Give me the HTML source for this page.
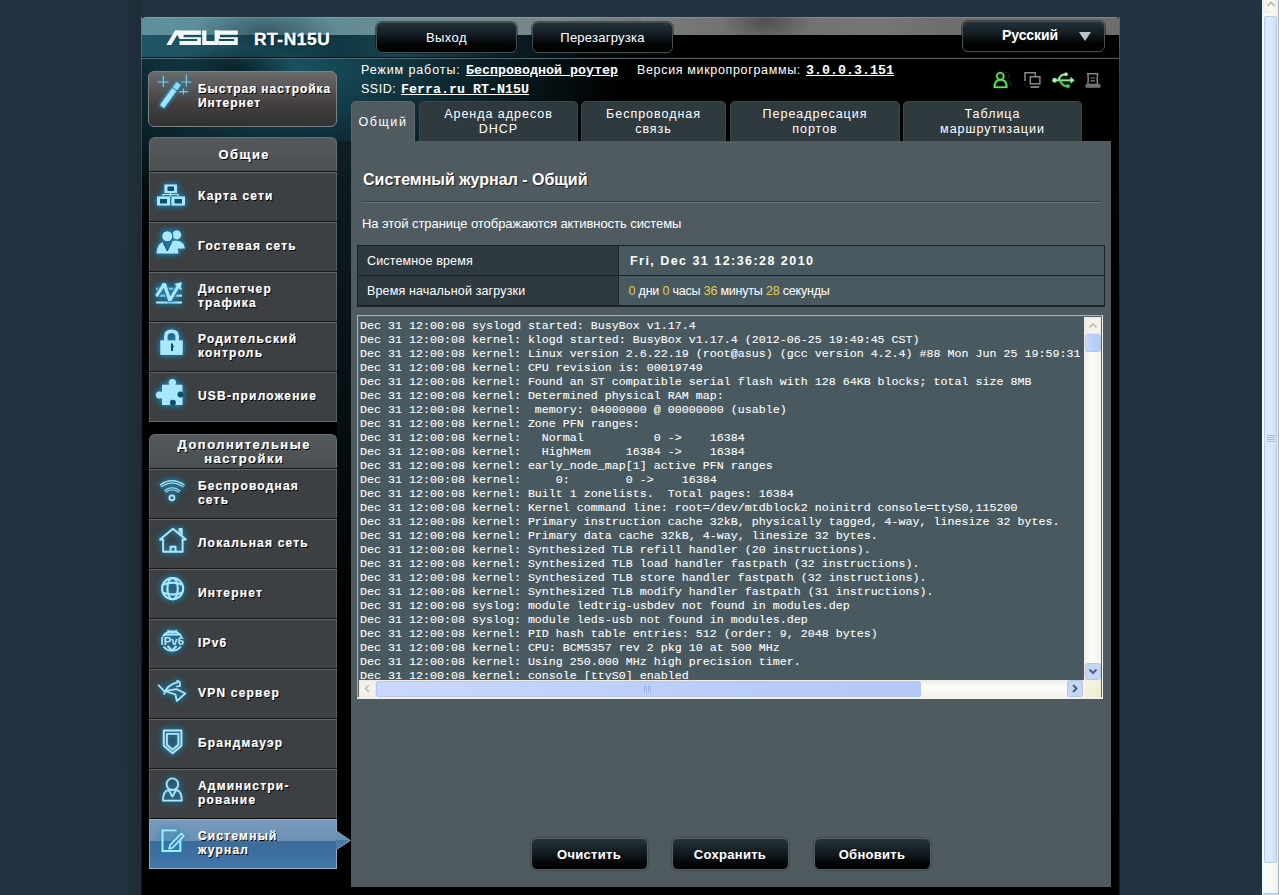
<!DOCTYPE html>
<html><head><meta charset="utf-8"><title>ASUS RT-N15U</title>
<style>
*{margin:0;padding:0;box-sizing:border-box}
html,body{width:1279px;height:895px;overflow:hidden}
body{position:relative;background:#22333f;font-family:"Liberation Sans",sans-serif;color:#fff}
.a{position:absolute}
#pgshade{left:120px;top:0;width:21px;height:895px;background:linear-gradient(90deg,#22333f,#1d2c36)}
#wrap{left:141px;top:17px;width:979px;height:878px;background:#000;border-radius:5px 5px 0 0;overflow:hidden}
#hdr{left:141px;top:17px;width:979px;height:40px;border-radius:5px 5px 0 0;overflow:hidden;box-shadow:inset 0 1px 0 rgba(255,255,255,.18);
 background:linear-gradient(180deg,rgba(255,255,255,0) 0,rgba(255,255,255,0) 18px,rgba(0,0,0,.0) 18px),
 linear-gradient(90deg,#5f919d 0,#5a8b97 120px,#6a8c93 260px,#788585 420px,#707070 560px,#6d6d6d 979px)}
#hdrlow{left:141px;top:35px;width:979px;height:22px;
 background:linear-gradient(90deg,#1f5564 0,#1d5260 90px,#0f3845 200px,#1a4450 260px,#0c2026 360px,#030607 460px,#000 560px,#000 979px)}
#sepd{left:141px;top:57px;width:979px;height:1px;background:#071015}
#sepl{left:141px;top:58px;width:979px;height:1px;background:linear-gradient(90deg,#4f6f79,#55656a 400px,#505556 979px)}
#glow{left:141px;top:59px;width:979px;height:300px;
 background:radial-gradient(ellipse 330px 170px at 150px 10px,rgba(27,88,105,.95),rgba(20,64,78,.6) 50%,rgba(0,0,0,0) 100%)}
#lborder{left:141px;top:17px;width:1px;height:878px;background:linear-gradient(#5d8d99,#35525a 60px,#1b2a30 300px,#0e1418)}
#rborder{left:1119px;top:17px;width:1px;height:878px;background:linear-gradient(#6d6d6d,#3a3a3a 60px,#222 300px,#1a1a1a)}

/* logo */
#logo{left:160px;top:28px;width:80px;height:20px}
#model{left:254px;top:28.7px;letter-spacing:.55px;font:bold 17.4px/20px "Liberation Sans",sans-serif;color:#fff;-webkit-text-stroke:.35px #fff;text-shadow:1px 1px 1px rgba(0,0,0,.5)}

/* top buttons */
.tb{height:31px;border-radius:6px;border:1px solid #465053;
 background:linear-gradient(#23323a 0,#141d22 40%,#020303 75%,#000 100%);
 box-shadow:0 0 0 1px rgba(0,0,0,.4), 0 1px 1px rgba(255,255,255,.08)}
.tbt{width:100%;text-align:center;top:7px;font:13px/16px "Liberation Sans",sans-serif;color:#fff;letter-spacing:.4px}
#b1{left:376px;top:22px;width:141px}
#b2{left:532px;top:22px;width:141px}
#b3{left:962px;top:21px;width:143px}
#b3 .tbt{font-weight:bold;font-size:14px;left:7px;width:120px;top:5px;letter-spacing:-.1px}
#tri{left:1079px;top:32px;width:0;height:0;border-left:6px solid transparent;border-right:6px solid transparent;border-top:9px solid #b9c3c9}

/* info */
.inf{font:12.5px/16px "Liberation Sans",sans-serif;color:#fff;white-space:nowrap}
.mono{font:bold 13.333px/16px "Liberation Mono",monospace;text-decoration:underline;color:#fff}
#inf1{left:361px;top:62px}
#inf2{left:637px;top:62px}
#inf3{left:361px;top:81px}

/* status icons */
.si{top:71px;width:20px;height:18px}

/* tabs */
.tab{top:101px;height:40px;border-radius:5px 5px 0 0;background:#2f3a3f;font:12.5px/15px "Liberation Sans",sans-serif;letter-spacing:.98px;color:#fff;text-align:center;border:1px solid #3b474c;border-bottom:none}
.tab.one{padding-top:13px}
.tab.two{padding-top:5px}
.tab.act{background:#505b60;border-color:#5d686c;letter-spacing:1.55px}

/* sidebar */
#qs{left:148px;top:71px;width:189px;height:56px;border-radius:6px;border:1px solid #7d8184;
 background:linear-gradient(#6b6a6a 0,#595654 30%,#443f3e 60%,#2f3233 100%)}
#qsic{left:150px;top:72px;width:45px;height:50px}
#qst{left:198px;top:82px;font:bold 12px/14px "Liberation Sans",sans-serif;letter-spacing:.95px;text-shadow:1px 1px 0 #000;-webkit-text-stroke:.2px #fff}
.mh{left:149px;width:188px;height:34px;border-radius:6px 6px 0 0;border:1px solid #686d70;border-bottom:none;
 background:linear-gradient(#54595c,#4a4f52)}
.mht{width:100%;text-align:center;padding-left:2.5px;font:bold 13px/14px "Liberation Sans",sans-serif;letter-spacing:1.45px;text-shadow:1px 1px 0 #000;-webkit-text-stroke:.2px #fff}
.mi{left:149px;width:188px;height:50px;background:#3c4043;border-left:1px solid #5a5e60;border-right:1px solid #5a5e60}
.mi::after{content:"";position:absolute;left:-1px;right:-1px;top:0;height:2px;background:linear-gradient(#141617 0,#141617 1px,#62676a 1px)}
.mi.sel{background:linear-gradient(#7a9cbc 0,#6c91b4 46%,#3d6c9b 46%,#3d6e9f 70%,#4479ad 100%);border-color:#8aa8c2;box-shadow:inset 0 1px 0 #93b0c8}
.mi.sel::after{background:linear-gradient(#111 0,#111 1px,#93b0c8 1px)}
.mt{left:48px;top:18px;font:bold 12px/14px "Liberation Sans",sans-serif;letter-spacing:1.2px;white-space:nowrap;text-shadow:1px 1px 0 #000;-webkit-text-stroke:.2px #fff}
.mt.two{top:11px}
.ic{left:0;top:0;width:45px;height:50px}
#arrow{left:337px;top:825px;width:0;height:0;border-top:16px solid transparent;border-bottom:16px solid transparent;border-left:13px solid #5a86ad}
#colgap{left:337px;top:141px;width:14px;height:754px;background:linear-gradient(#0d1e25,#060d10 300px,#000 500px)}

/* content */
#content{left:351px;top:141px;width:760px;height:746px;background:#505b60}
#title{left:363px;top:170px;font:bold 16px/20px "Liberation Sans",sans-serif;color:#fff;text-shadow:1px 1px 1px #1f2628}
#hr{left:362px;top:201px;width:738px;height:2px;background:linear-gradient(#353d41 0,#353d41 1px,#6a7478 1px)}
#desc{left:362px;top:216px;font:13px/16px "Liberation Sans",sans-serif;color:#fff;letter-spacing:-.06px}
#tbl{left:357px;top:245px;width:748px;height:62px;background:#1d2426}
.c1{left:1px;width:260px;height:29px;background:#2f3a40;font:12.5px/16px "Liberation Sans",sans-serif;letter-spacing:.15px;padding:7px 0 0 9px}
.c2{left:262px;width:485px;height:29px;background:#485a60;font:12.5px/16px "Liberation Sans",sans-serif;letter-spacing:-.2px;padding:7px 0 0 9.5px}
.y{color:#e3cf55}
#fri{font-weight:bold;font-size:12.5px;letter-spacing:1.46px;margin-left:1.5px}

#logbox{left:357px;top:315px;width:746px;height:384px;background:#56646a;border-top:1px solid #a9b3b4;border-left:1px solid #a9b3b4;border-right:1px solid #f5f5f5;border-bottom:2px solid #f2f2f2}
#logview{left:359px;top:317px;width:725px;height:363px;background:#485a60;overflow:hidden}
#logtxt{left:359px;top:317px;width:725px;height:363px;overflow:hidden;white-space:pre;font:11.667px/14px "Liberation Mono",monospace;color:#fff;padding:2px 0 0 1px;-webkit-text-stroke:.08px #fff}

/* scrollbars */
#vsb{left:1084px;top:317px;width:17px;height:363px;background:linear-gradient(90deg,#eeede5,#fdfdf8 40%,#f3f1ea)}
#hsb{left:359px;top:680px;width:725px;height:17px;background:linear-gradient(#eeede5,#fdfdf8 40%,#f3f1ea)}
#corner{left:1084px;top:680px;width:17px;height:17px;background:linear-gradient(135deg,#f6f3e4,#efeccf)}
.sbtn{width:17px;height:17px;border-radius:2px}
.thumb{border-radius:2px;border:1px solid #b6c8f6;background:linear-gradient(90deg,#c9d8fc,#bccff9 50%,#b3c8f7)}

/* bottom buttons */
.bb{top:838px;width:117px;height:32px;border-radius:6px;border:1px solid #566064;
 background:linear-gradient(#253439 0,#131c20 45%,#050708 80%,#000 100%);box-shadow:0 0 2px rgba(0,0,0,.6)}
.bbt{width:100%;text-align:center;top:8px;font:bold 13px/16px "Liberation Sans",sans-serif;color:#fff;letter-spacing:.3px}

/* page scrollbar */
#psb{left:1262px;top:0;width:17px;height:895px;background:linear-gradient(90deg,#e9f8fb 0,#f2fdfd 2px,#f8f8f2 60%,#f1f0e8 100%)}

.mi.last{height:51px;border-bottom:1px solid #62676a}
.mi.sel.last{border-bottom-color:#8fb0cc}
#blob{left:141px;top:17px;width:500px;height:124px;background:radial-gradient(ellipse 75px 26px at 125px 16px,rgba(5,25,32,.42),rgba(5,25,32,0)),radial-gradient(ellipse 60px 22px at 95px 52px,rgba(0,0,0,.5),rgba(0,0,0,0))}
#blob2{left:641px;top:17px;width:300px;height:18px;background:radial-gradient(ellipse 45px 22px at 125px 4px,rgba(20,20,20,.35),rgba(20,20,20,0)),linear-gradient(90deg,rgba(255,255,255,.06),rgba(255,255,255,0) 40%,rgba(255,255,255,.05) 80%,rgba(255,255,255,0))}

</style></head><body>
<svg width="0" height="0" style="position:absolute"><defs><filter id="glw" x="-50%" y="-50%" width="200%" height="200%"><feGaussianBlur in="SourceAlpha" stdDeviation="3.2" result="b"/><feFlood flood-color="#1a8cc4" flood-opacity=".8"/><feComposite in2="b" operator="in" result="g"/><feMerge><feMergeNode in="g"/><feMergeNode in="g"/><feMergeNode in="SourceGraphic"/></feMerge></filter></defs></svg>
<div id="pgshade" class="a"></div>
<div id="wrap" class="a"></div>
<div id="hdr" class="a"></div>
<div id="hdrlow" class="a"></div>
<div id="sepd" class="a"></div>
<div id="sepl" class="a"></div>
<div id="glow" class="a"></div>
<div id="blob" class="a"></div>
<div id="blob2" class="a"></div>
<div id="lborder" class="a"></div>
<div id="rborder" class="a"></div>
<svg id="logo" class="a" viewBox="160 28 80 20"><g fill="#f2f9f9">
<polygon points="166.3,45 175,30.6 179.8,30.6 171.2,45"/>
<path d="M175 30.6 H200.9 V34.7 H183.6 V37.3 H200.9 V45 H179.5 V41 H197.2 V38.9 H179.5 Z"/>
<path d="M202.2 30.6 H206.4 V41 H214.6 V30.6 H218.8 V45 H202.2 Z"/>
<path d="M214.6 30.6 H237.8 V34.7 H220 V37.3 H237.8 V45 H218.8 V41 H234.2 V38.9 H218.8 Z"/>
</g></svg>
<div id="model" class="a">RT-N15U</div>

<div id="b1" class="tb a"><div class="tbt a">Выход</div></div>
<div id="b2" class="tb a"><div class="tbt a" style="letter-spacing:.25px">Перезагрузка</div></div>
<div id="b3" class="tb a"><div class="tbt a">Русский</div></div>
<div id="tri" class="a"></div>

<div id="inf1" class="inf a" style="letter-spacing:.9px">Режим работы: </div><div class="inf mono a" style="left:466px;top:63px">Беспроводной роутер</div>
<div id="inf2" class="inf a" style="letter-spacing:.66px">Версия микропрограммы: </div><div class="inf mono a" style="left:806px;top:63px">3.0.0.3.151</div>
<div id="inf3" class="inf a" style="letter-spacing:.53px">SSID: </div><div class="inf mono a" style="left:401px;top:82px">Ferra.ru RT-N15U</div>

<svg class="a" style="left:985px;top:66px;overflow:visible" width="125" height="28" viewBox="985 66 125 28">
<defs><filter id="gg" x="-50%" y="-50%" width="200%" height="200%"><feGaussianBlur in="SourceAlpha" stdDeviation="1.3" result="b"/><feFlood flood-color="#1fa31f" flood-opacity=".8"/><feComposite in2="b" operator="in" result="g"/><feMerge><feMergeNode in="g"/><feMergeNode in="SourceGraphic"/></feMerge></filter></defs>
<g fill="none" stroke="#1c211c" stroke-width="1.3"><path d="M1004.5 72.5 A3 3 0 1 1 1007 78.5"/><path d="M1008.5 80 Q1011.5 82 1011.5 86.5"/></g>
<g filter="url(#gg)" fill="none" stroke="#6fdc6f" stroke-width="1.6"><circle cx="1000.3" cy="76.2" r="3.4"/><path d="M994.5 87.3 Q994.5 79.8 1000.6 79.8 Q1006.7 79.8 1006.7 87.3 Z"/></g>
<g fill="none" stroke="#8a8a8a" stroke-width="1.5"><path d="M1025 81 V72.8 H1035.3 V76"/><rect x="1030.3" y="76.8" width="9.6" height="7"/><path d="M1030.4 87 H1039.2" stroke-width="1.8"/><path d="M1025 84 V84.5 M1026.5 86.5 H1027" stroke-width="1"/></g>
<g filter="url(#gg)"><path d="M1055 80.3 H1071.5" stroke="#8fe08f" stroke-width="1.7"/><path d="M1070.5 77 L1074.5 80.3 L1070.5 83.5 Z" fill="#a8e8a8"/><circle cx="1054.6" cy="80.3" r="2.2" fill="#b8ecb8"/><path d="M1058.5 80 Q1060 74.5 1065 74.3" stroke="#a8e8a8" stroke-width="1.7" fill="none"/><circle cx="1066" cy="74.3" r="1.7" fill="#b8ecb8"/><path d="M1060 80.5 Q1062 86.2 1067 86.2" stroke="#5bd45b" stroke-width="1.7" fill="none"/><rect x="1066.5" y="84.6" width="3" height="3" fill="#5bd45b"/></g>
<g fill="none" stroke="#858585" stroke-width="1.5"><path d="M1087.8 73.8 H1097.6 Q1096.6 79 1097.6 84.5 H1087.8 Q1088.8 79 1087.8 73.8 Z"/><path d="M1090.5 78 H1095 M1090.5 80.8 H1095" stroke-width="1.2"/></g><rect x="1085.5" y="84.2" width="15" height="3.6" fill="#707070"/>
</svg>

<div class="tab act one a" style="left:351px;width:64px">Общий</div>
<div class="tab two a" style="left:419px;width:159px">Аренда адресов<br>DHCP</div>
<div class="tab two a" style="left:581px;width:145px">Беспроводная<br>связь</div>
<div class="tab two a" style="left:730px;width:170px">Переадресация<br>портов</div>
<div class="tab two a" style="left:903px;width:179px">Таблица<br>маршрутизации</div>

<div id="colgap" class="a"></div>
<div id="qs" class="a"></div>
<svg id="qsic" class="a" viewBox="150 72 45 50" style="overflow:visible"><g stroke="#86dff5" stroke-width="1.1" opacity=".85" filter="url(#glw)"><path d="M163.4 75.5 V87 M157.8 82 H168.6"/><path d="M186.3 74.5 V86.5 M181.3 82 H191.4"/><path d="M183.5 88.5 V94.5 M179 91.6 H188"/></g>
<g filter="url(#glw)" transform="rotate(36 170 95)"><rect x="167.7" y="80.5" width="5.2" height="6.6" fill="#86e4fb"/><rect x="167.7" y="88.2" width="5.2" height="21" fill="#9aeaff"/></g></svg>
<div id="qst" class="a">Быстрая настройка<br>Интернет</div>

<div class="mh a" style="top:137px"><div class="mht a" style="top:10px">Общие</div></div>
<div class="mh a" style="top:434px"><div class="mht a" style="top:3px">Дополнительные<br>настройки</div></div>
<div class="mi a" style="top:171px"><div class="ic a"><svg width="45" height="50" viewBox="0 0 45 50" style="display:block;overflow:visible"><g filter="url(#glw)"><rect x="14.5" y="13.5" width="12.5" height="8.5" fill="#a8e8fa"/><rect x="7" y="25.5" width="13" height="9" fill="#a8e8fa"/><rect x="21.5" y="25.5" width="13.5" height="9" fill="#a8e8fa"/><path d="M20.5 22 V25.5 M13 25 V23.5 H28 V25" stroke="#a8e8fa" stroke-width="1.2" fill="none"/></g><rect x="17.5" y="15.5" width="6.5" height="4.5" fill="#0e4f6e"/><rect x="10" y="28" width="7" height="4.5" fill="#0e4f6e"/><rect x="24.5" y="28" width="7.5" height="4.5" fill="#0e4f6e"/></svg></div><div class="mt a">Карта сети</div></div>
<div class="mi a" style="top:221px"><div class="ic a"><svg width="45" height="50" viewBox="0 0 45 50" style="display:block;overflow:visible"><g filter="url(#glw)"><circle cx="26.8" cy="13.9" r="4.3" fill="#a8e8fa"/><path d="M22 20 Q30 18.5 33.5 23 L35 27.5 H27 Z" fill="#a8e8fa"/><circle cx="17.3" cy="15.3" r="5.6" fill="#a8e8fa" stroke="#0e4f6e" stroke-width="1"/><path d="M6.5 32.5 Q7.5 22 13 21.3 L17.3 30 L21.6 21.3 Q27.5 22 28.5 32.5 Z" fill="#a8e8fa"/></g><path d="M13.2 21.5 L17.3 30 L21.4 21.5" stroke="#0e4f6e" stroke-width="1" fill="none"/></svg></div><div class="mt a">Гостевая сеть</div></div>
<div class="mi a" style="top:271px"><div class="ic a"><svg width="45" height="50" viewBox="0 0 45 50" style="display:block;overflow:visible"><g filter="url(#glw)"><path d="M6 17.8 H32 M6 24.6 H32 M6 31.5 H32" stroke="#a8e8fa" stroke-width="2.2" fill="none"/></g><path d="M6.5 25 L14.3 12.8 L19.8 29.5 L28.5 14.5" stroke="#2a5a70" stroke-width="5.5" fill="none" stroke-linejoin="bevel"/><g filter="url(#glw)"><path d="M6.5 25 L14.3 12.8 L19.8 29.5 L28.5 14.5" stroke="#a8e8fa" stroke-width="3.2" fill="none" stroke-linejoin="bevel"/><path d="M32 11 L24.5 13 L30.2 18.5 Z" fill="#a8e8fa"/></g></svg></div><div class="mt a two">Диспетчер<br>трафика</div></div>
<div class="mi a" style="top:321px"><div class="ic a"><svg width="45" height="50" viewBox="0 0 45 50" style="display:block;overflow:visible"><g filter="url(#glw)"><path d="M14 20 V15.5 Q14 8.5 21.5 8.5 Q29 8.5 29 15.5 V20 H25.5 V16 Q25.5 12 21.5 12 Q17.5 12 17.5 16 V20 Z" fill="#a8e8fa"/><rect x="10.3" y="19.4" width="22.4" height="14.5" fill="#a8e8fa"/></g><path d="M21 22.5 H23 V24.5 L24.5 25.5 L23 26.5 V30 H21 Z" fill="#0e4f6e"/></svg></div><div class="mt a two">Родительский<br>контроль</div></div>
<div class="mi a last" style="top:371px"><div class="ic a"><svg width="45" height="50" viewBox="0 0 45 50" style="display:block;overflow:visible"><g filter="url(#glw)"><rect x="12" y="13.8" width="20.4" height="20.2" fill="#a8e8fa"/><circle cx="22.4" cy="11.6" r="3.6" fill="#a8e8fa"/><circle cx="9.5" cy="24" r="3.6" fill="#a8e8fa"/></g><circle cx="30.5" cy="23.6" r="3" fill="#0e4f6e"/><circle cx="22.9" cy="31.8" r="3" fill="#0e4f6e"/></svg></div><div class="mt a">USB-приложение</div></div>
<div class="mi a" style="top:468px"><div class="ic a"><svg width="45" height="50" viewBox="0 0 45 50" style="display:block;overflow:visible"><g filter="url(#glw)" fill="none" stroke="#a8e8fa"><path d="M10.5 18 Q22 9.5 34 18" stroke-width="3.2"/><path d="M15 23.5 Q22 18 29.5 23.5" stroke-width="3"/><circle cx="21.9" cy="29.8" r="2.5" stroke-width="1.8"/></g><g fill="none" stroke="#0e4f6e" stroke-width=".9"><path d="M10.5 18 Q22 9.5 34 18"/><path d="M15 23.5 Q22 18 29.5 23.5"/></g></svg></div><div class="mt a two">Беспроводная<br>сеть</div></div>
<div class="mi a" style="top:518px"><div class="ic a"><svg width="45" height="50" viewBox="0 0 45 50" style="display:block;overflow:visible"><g filter="url(#glw)" fill="none" stroke="#a8e8fa" stroke-width="1.9" stroke-linejoin="round"><path d="M10 21.5 L22.9 10.8 L35.8 21.5 H32.6 V33.8 H13.1 V21.5 Z"/><path d="M20.6 33.8 V28.8 H25.5 V33.8"/><path d="M29.5 16 V11 H31.7 V18"/></g></svg></div><div class="mt a">Локальная сеть</div></div>
<div class="mi a" style="top:568px"><div class="ic a"><svg width="45" height="50" viewBox="0 0 45 50" style="display:block;overflow:visible"><g filter="url(#glw)" fill="none" stroke="#a8e8fa" stroke-width="2"><circle cx="22.6" cy="20.6" r="10.6"/><ellipse cx="22.6" cy="20.6" rx="5.2" ry="10.6"/><path d="M12.8 16.5 Q22.6 13 32.4 16.5 M12.8 24.7 Q22.6 28.2 32.4 24.7"/></g></svg></div><div class="mt a">Интернет</div></div>
<div class="mi a" style="top:618px"><div class="ic a"><svg width="45" height="50" viewBox="0 0 45 50" style="display:block;overflow:visible"><g filter="url(#glw)"><g fill="none" stroke="#a8e8fa" stroke-width="1.8"><path d="M12.8 18.5 A11 11 0 0 1 31.5 18.5"/><path d="M13.5 28.5 A11 11 0 0 0 30.8 28.5"/><path d="M14.5 16.5 H29.5 M17.5 12.5 Q22 16 27 12.5 M17.5 28 L22 32.5 L26.5 28"/></g><text x="10.5" y="27" font-family="Liberation Sans" font-weight="bold" font-size="10.5" fill="#a8e8fa" textLength="23.5" lengthAdjust="spacingAndGlyphs">IPv6</text></g></svg></div><div class="mt a">IPv6</div></div>
<div class="mi a" style="top:668px"><div class="ic a"><svg width="45" height="50" viewBox="0 0 45 50" style="display:block;overflow:visible"><g filter="url(#glw)" fill="none" stroke="#a8e8fa" stroke-width="1.7" stroke-linejoin="round"><path d="M8.2 16.8 L14.5 23.5"/><path d="M13.8 26.5 Q17 16.5 28.2 14.2"/><path d="M26.5 12.6 L29.6 13.8 L30.2 18 L26.2 18.5"/><path d="M14.8 23 L26.8 21.2 L35.4 25.4 L26.8 33 L25.5 26.5 Z"/></g></svg></div><div class="mt a">VPN сервер</div></div>
<div class="mi a" style="top:718px"><div class="ic a"><svg width="45" height="50" viewBox="0 0 45 50" style="display:block;overflow:visible"><g filter="url(#glw)" fill="none" stroke="#a8e8fa" stroke-width="1.9" stroke-linejoin="round"><path d="M13.8 12.5 H31.4 V27.8 L22.6 35.2 L13.8 27.8 Z"/><path d="M16.9 15.9 H28.4 V26.8 L22.6 31.8 L16.9 26.8 Z"/></g></svg></div><div class="mt a">Брандмауэр</div></div>
<div class="mi a" style="top:768px"><div class="ic a"><svg width="45" height="50" viewBox="0 0 45 50" style="display:block;overflow:visible"><g filter="url(#glw)" fill="none" stroke="#a8e8fa" stroke-width="1.8" stroke-linejoin="round"><circle cx="22.4" cy="16.2" r="5.8"/><path d="M13 32.6 Q13 23 18.6 21.8 L22.4 28.6 L26.2 21.8 Q31.8 23 31.8 32.6 Z"/></g></svg></div><div class="mt a two">Администри-<br>рование</div></div>
<div class="mi a sel last" style="top:818px"><div class="ic a"><svg width="45" height="50" viewBox="0 0 45 50" style="display:block;overflow:visible"><g filter="url(#glw)" fill="none" stroke="#a8e8fa"><path d="M30.3 22.5 V33 H12.5 V12.4 H26.5" stroke-width="1.9"/><path d="M19.3 30.8 L20 27.2 L31.3 15.5 L33.8 18 L22.5 29.8 Z" stroke-width="1.7" stroke-linejoin="round"/></g></svg></div><div class="mt a two">Системный<br>журнал</div></div>
<svg class="a" style="left:336px;top:829px" width="16" height="23" viewBox="336 829 16 23"><defs><linearGradient id="arg" x1="0" y1="0" x2="0" y2="1"><stop offset="0" stop-color="#7398ba"/><stop offset=".5" stop-color="#6a90b3"/><stop offset=".5" stop-color="#4a7aa8"/><stop offset="1" stop-color="#4a7cab"/></linearGradient></defs><polygon points="336,831 350.3,840.5 336,849.5" fill="url(#arg)"/><path d="M336.5 831 L350.3 840.5 L336.5 849.5" fill="none" stroke="#9cb6cc" stroke-width=".9"/></svg>
<div id="content" class="a"></div>
<div id="title" class="a">Системный журнал - Общий</div>
<div id="hr" class="a"></div>
<div id="desc" class="a">На этой странице отображаются активность системы</div>
<div id="tbl" class="a">
 <div class="c1 a" style="top:1px">Системное время</div>
 <div class="c2 a" style="top:1px"><span id="fri">Fri, Dec 31 12:36:28 2010</span></div>
 <div class="c1 a" style="top:31px">Время начальной загрузки</div>
 <div class="c2 a" style="top:31px"><span class="y">0</span> дни <span class="y">0</span> часы <span class="y">36</span> минуты <span class="y">28</span> секунды</div>
</div>
<div id="logbox" class="a"></div>
<div id="logview" class="a"></div>
<div id="logtxt" class="a">Dec 31 12:00:08 syslogd started: BusyBox v1.17.4
Dec 31 12:00:08 kernel: klogd started: BusyBox v1.17.4 (2012-06-25 19:49:45 CST)
Dec 31 12:00:08 kernel: Linux version 2.6.22.19 (root@asus) (gcc version 4.2.4) #88 Mon Jun 25 19:59:31 CST 2012
Dec 31 12:00:08 kernel: CPU revision is: 00019749
Dec 31 12:00:08 kernel: Found an ST compatible serial flash with 128 64KB blocks; total size 8MB
Dec 31 12:00:08 kernel: Determined physical RAM map:
Dec 31 12:00:08 kernel:  memory: 04000000 @ 00000000 (usable)
Dec 31 12:00:08 kernel: Zone PFN ranges:
Dec 31 12:00:08 kernel:   Normal          0 -&gt;    16384
Dec 31 12:00:08 kernel:   HighMem     16384 -&gt;    16384
Dec 31 12:00:08 kernel: early_node_map[1] active PFN ranges
Dec 31 12:00:08 kernel:     0:        0 -&gt;    16384
Dec 31 12:00:08 kernel: Built 1 zonelists.  Total pages: 16384
Dec 31 12:00:08 kernel: Kernel command line: root=/dev/mtdblock2 noinitrd console=ttyS0,115200
Dec 31 12:00:08 kernel: Primary instruction cache 32kB, physically tagged, 4-way, linesize 32 bytes.
Dec 31 12:00:08 kernel: Primary data cache 32kB, 4-way, linesize 32 bytes.
Dec 31 12:00:08 kernel: Synthesized TLB refill handler (20 instructions).
Dec 31 12:00:08 kernel: Synthesized TLB load handler fastpath (32 instructions).
Dec 31 12:00:08 kernel: Synthesized TLB store handler fastpath (32 instructions).
Dec 31 12:00:08 kernel: Synthesized TLB modify handler fastpath (31 instructions).
Dec 31 12:00:08 syslog: module ledtrig-usbdev not found in modules.dep
Dec 31 12:00:08 syslog: module leds-usb not found in modules.dep
Dec 31 12:00:08 kernel: PID hash table entries: 512 (order: 9, 2048 bytes)
Dec 31 12:00:08 kernel: CPU: BCM5357 rev 2 pkg 10 at 500 MHz
Dec 31 12:00:08 kernel: Using 250.000 MHz high precision timer.
Dec 31 12:00:08 kernel: console [ttyS0] enabled</div>
<div id="vsb" class="a"></div>
<svg class="a" style="left:1085px;top:317px" width="16" height="17" viewBox="0 0 16 17"><rect x=".5" y=".5" width="15" height="16" rx="2" fill="#f3f2ea" stroke="#eae8df"/><path d="M4.5 10.5 L8 7 L11.5 10.5" stroke="#c0bcb0" stroke-width="1.6" fill="none"/></svg>
<div class="thumb a" style="left:1085px;top:334px;width:16px;height:18px"></div>
<svg class="a" style="left:1085px;top:663px" width="16" height="17" viewBox="0 0 16 17"><rect x=".5" y=".5" width="15" height="16" rx="2" fill="#c8d6f6" stroke="#b4c4ea"/><path d="M4.5 6.5 L8 10 L11.5 6.5" stroke="#4d6185" stroke-width="2" fill="none"/></svg>
<div id="hsb" class="a"></div>
<svg class="a" style="left:359px;top:680px" width="17" height="17" viewBox="0 0 17 17"><rect x=".5" y=".5" width="16" height="16" rx="2" fill="#f3f2ea" stroke="#eae8df"/><path d="M10 5 L6.5 8.5 L10 12" stroke="#c0bcb0" stroke-width="1.6" fill="none"/></svg>
<div class="thumb a" style="left:376px;top:681px;width:545px;height:16px"></div>
<svg class="a" style="left:643px;top:684px" width="10" height="10"><path d="M1.5 1.5 V8.5 M3.5 1.5 V8.5 M5.5 1.5 V8.5 M7.5 1.5 V8.5" stroke="#9cb2e6" stroke-width="1"/></svg>
<svg class="a" style="left:1067px;top:680px" width="16" height="17" viewBox="0 0 16 17"><rect x=".5" y=".5" width="15" height="16" rx="2" fill="#c8d6f6" stroke="#b4c4ea"/><path d="M6 5 L9.5 8.5 L6 12" stroke="#4d6185" stroke-width="2" fill="none"/></svg>
<div id="corner" class="a"></div>

<div class="bb a" style="left:530.5px"><div class="bbt a">Очистить</div></div>
<div class="bb a" style="left:671.5px"><div class="bbt a">Сохранить</div></div>
<div class="bb a" style="left:813.5px"><div class="bbt a">Обновить</div></div>

<div id="psb" class="a"></div>
<div class="a" style="left:1263px;top:-4px;width:16px;height:17px;border-radius:2px;background:linear-gradient(90deg,#f3f1e8,#fbfaf4 50%,#efeee6);border:1px solid #f0efe6"></div>
<svg class="a" style="left:1263px;top:-4px" width="16" height="17" viewBox="0 0 16 17"><path d="M4.5 10 L8 6.5 L11.5 10" stroke="#b7b3a8" stroke-width="1.6" fill="none"/></svg>
<div class="a" style="left:1264px;top:16px;width:13px;height:847px;border-radius:2px;border:1px solid #b8cddd;background:linear-gradient(90deg,#d6e6fd 0,#dbeafe 40%,#d6e6fc 70%,#cfe0f6 100%)"></div><div class="a" style="left:1278px;top:0;width:1px;height:895px;background:#a3b6c4"></div>
<svg class="a" style="left:1265.5px;top:434px" width="10" height="10"><path d="M1 1.5 H9 M1 3.5 H9 M1 5.5 H9 M1 7.5 H9" stroke="#a9bfd6" stroke-width="1"/></svg>
<div class="a" style="left:1263px;top:893px;width:16px;height:17px;border-radius:2px;background:#c4d1f2;border:1px solid #b9c7ec"></div>
</body></html>
